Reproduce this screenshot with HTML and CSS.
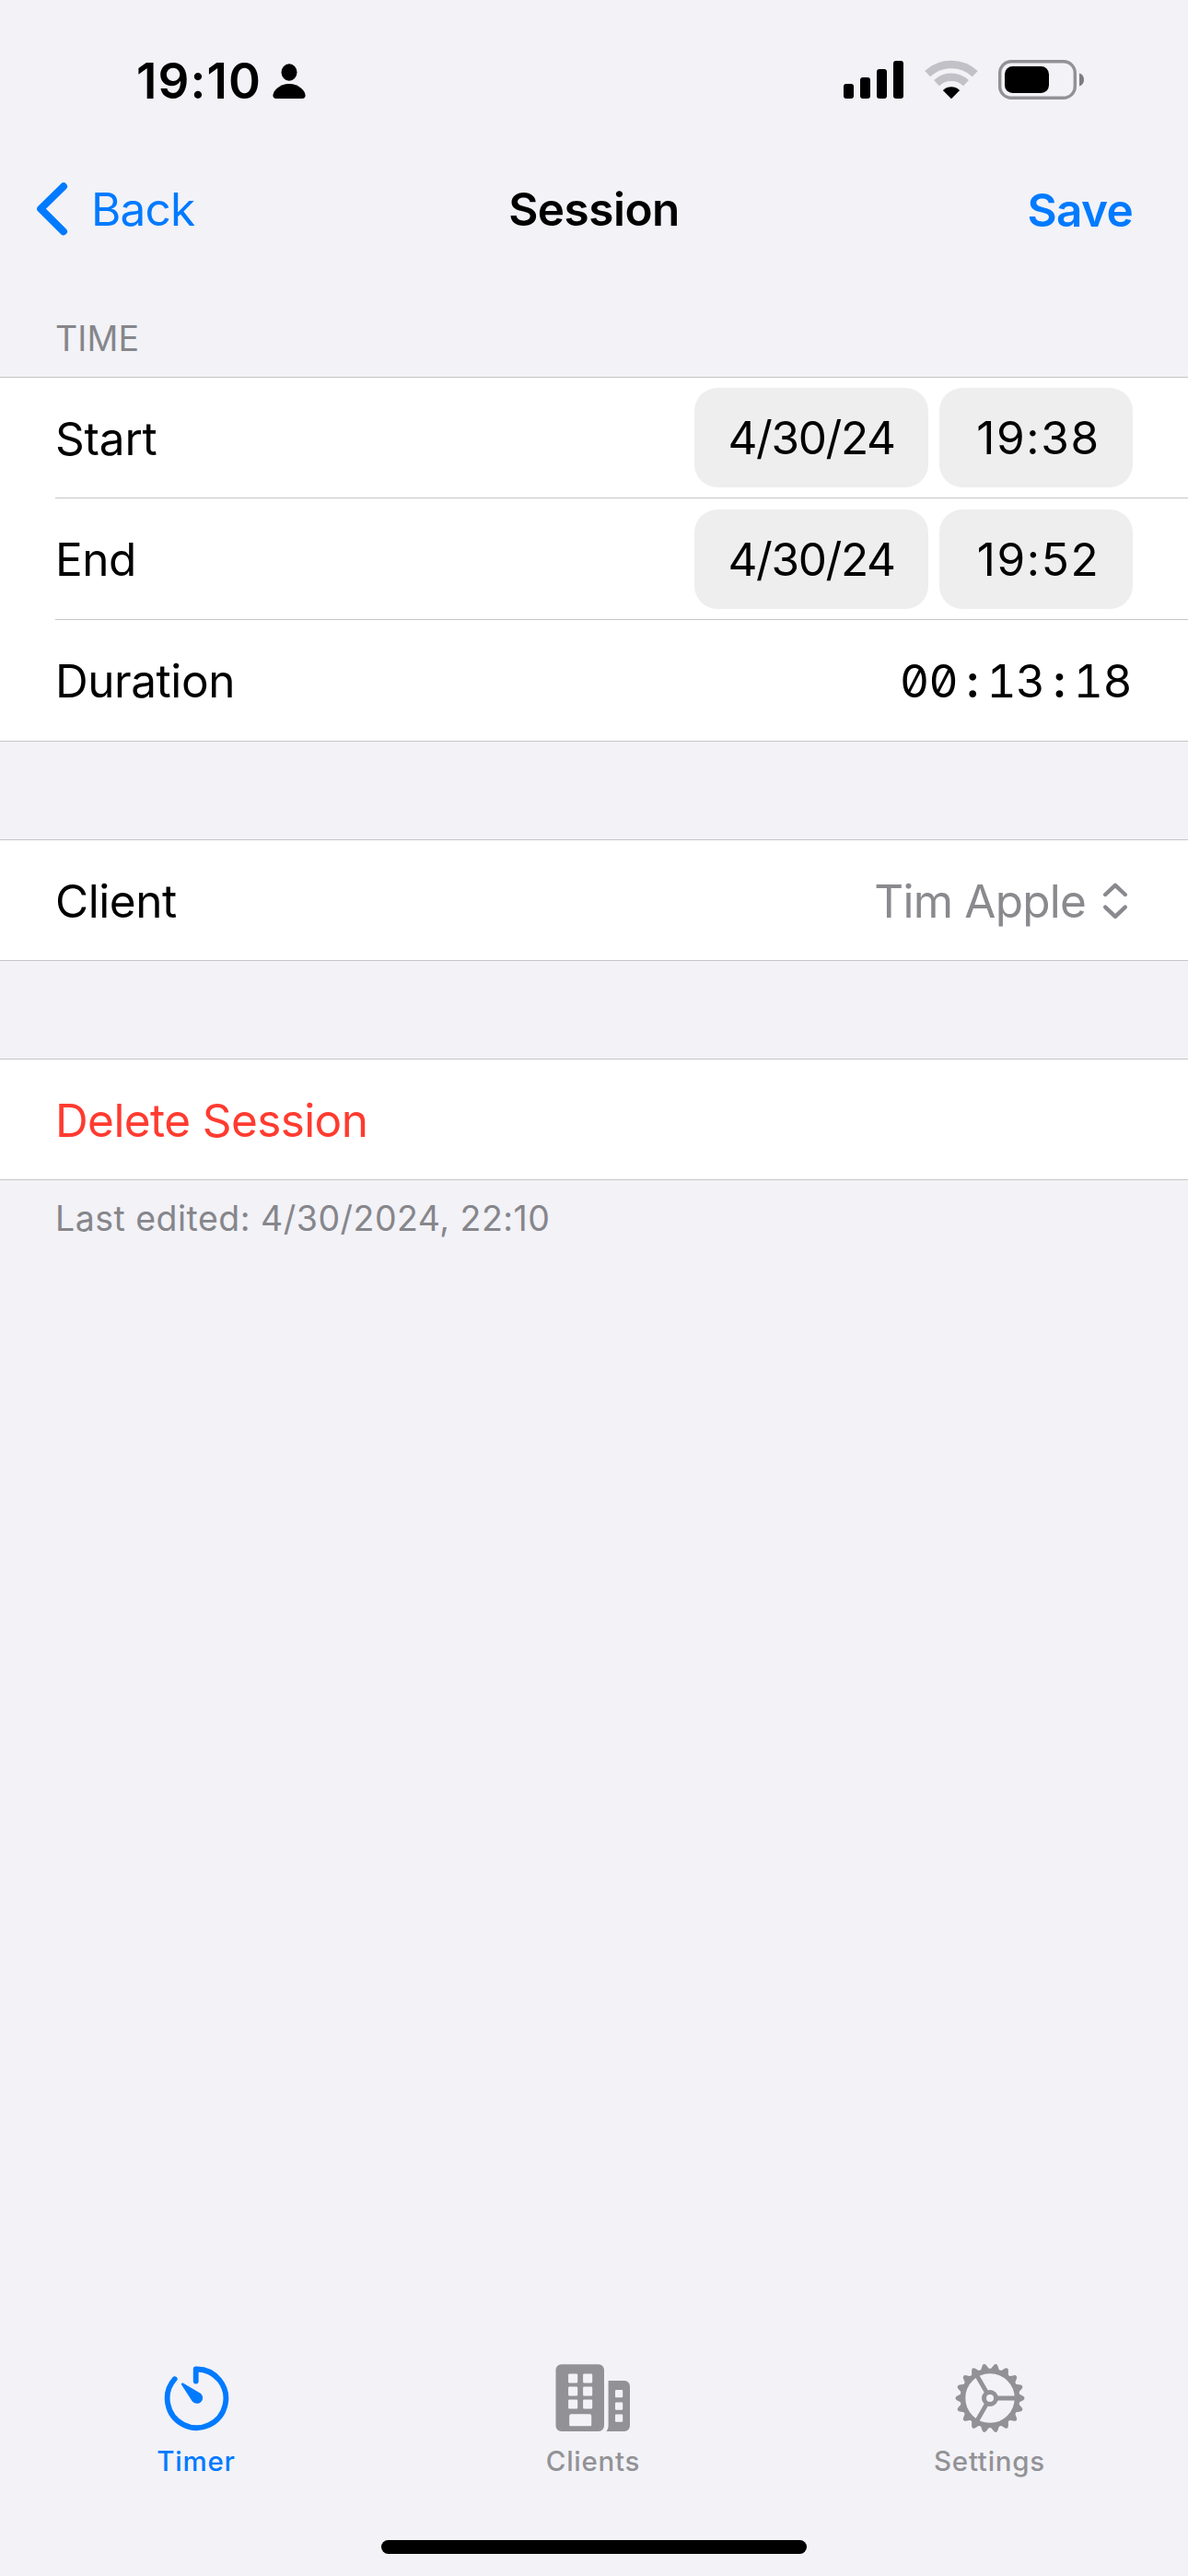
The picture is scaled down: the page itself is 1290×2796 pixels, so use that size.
FILE: index.html
```html
<!DOCTYPE html>
<html lang="en">
<head>
<meta charset="utf-8">
<title>Session</title>
<link rel="stylesheet" href="styles.css">
</head>
<body>
<div class="screen">
  <header class="status">
    <div class="status-left">
      <span class="clock">19:10</span>
      <svg class="person" width="36" height="38" viewBox="0 0 36 38"><ellipse cx="18" cy="9.500" rx="8.500" ry="9.300"/><path d="M4 38C1.500 38 .4 36.800.4 34.800.4 29.500 7.500 22 18 22s17.600 7.500 17.600 12.800c0 2-1.100 3.200-3.600 3.200z"/></svg>
    </div>
    <div class="status-right">
      <svg width="66" height="42" viewBox="0 0 66 42"><rect x="0" y="25" width="11" height="16" rx="3"/><rect x="18" y="18" width="11" height="23" rx="3"/><rect x="36" y="9" width="11" height="32" rx="3"/><rect x="54" y="0" width="11" height="41" rx="3"/></svg>
      <svg class="wifi" width="58" height="43" viewBox="0 0 58 43"><g fill="none" stroke="#c2c1c7" stroke-width="8.500"><path d="M3.200 15.200A37.500 37.500 0 0 1 54.800 15.200"/><path d="M13 25.200A23.200 23.200 0 0 1 45 25.200"/></g><path d="M29 42.300 20.300 33.600Q20 33 20.500 32.500A12.600 12.600 0 0 1 37.500 32.500Q38 33 37.700 33.600Z"/></svg>
      <svg width="94" height="43" viewBox="0 0 94 43"><rect x="1.700" y="1.700" width="81.600" height="39.600" rx="12.500" fill="none" stroke="#929195" stroke-width="3.400"/><rect x="7" y="7" width="48" height="29" rx="8.500"/><path d="M88 14.500c3.200.8 5 3.600 5 7s-1.800 6.200-5 7z" fill="#7d7c80"/></svg>
    </div>
  </header>

  <nav class="navbar">
    <a class="back"><svg width="34" height="58" viewBox="0 0 34 58"><path d="M29 4.300 4.200 28.700 29 53.300" fill="none" stroke="#007aff" stroke-width="8" stroke-linecap="round" stroke-linejoin="round"/></svg><span>Back</span></a>
    <h1>Session</h1>
    <a class="save">Save</a>
  </nav>

  <main>
    <h2 class="section-title">TIME</h2>
    <section class="group">
      <div class="row"><span class="start">Start</span><div class="pills"><span class="pill date">4/30/24</span><span class="pill time">19:38</span></div></div>
      <div class="row"><span>End</span><div class="pills"><span class="pill date">4/30/24</span><span class="pill time">19:52</span></div></div>
      <div class="row"><span>Duration</span><span class="duration">00<i>:</i>13<i>:</i>18</span></div>
    </section>
    <section class="group">
      <div class="row"><span>Client</span><span class="picker"><span>Tim Apple</span><svg width="28" height="40" viewBox="0 0 28 40"><g fill="none" stroke="#8a8a8e" stroke-width="4.400" stroke-linecap="round" stroke-linejoin="round"><path d="M3.200 13 14 2.800 24.800 13"/><path d="M3.200 26.600 14 36.800 24.800 26.600"/></g></svg></span></div>
    </section>
    <section class="group">
      <div class="row"><span class="delete">Delete Session</span></div>
    </section>
    <p class="footnote">Last edited: 4/30/2024, 22:10</p>
  </main>

  <footer class="tabs">
    <a class="tab timer">
      <svg width="76" height="76" viewBox="0 0 76 76"><path d="M14.700 17.200A31.800 31.800 0 1 0 37.700 6.500V19.500" fill="none" stroke="#007aff" stroke-width="5.800" stroke-linecap="round" stroke-linejoin="round"/><path d="M22.200 21.900C21.700 22.400 21.800 23 22.300 23.800L33.300 40.800C35.400 44 40 45 43 42.300 46 39.500 45.600 35 42.700 32.800L24.500 21.900C23.500 21.400 22.700 21.400 22.200 21.900Z" fill="#007aff"/></svg>
      <span>Timer</span>
    </a>
    <a class="tab clients">
      <svg width="82" height="76" viewBox="0 0 82 76"><path fill="#929296" fill-rule="evenodd" d="M6 1.200H47a6 6 0 0 1 6 6V68a6 6 0 0 1-6 6H6.500a6 6 0 0 1-6-6V7.200a6 6 0 0 1 6-6zM15.300 11.500h7.700a1.200 1.200 0 0 1 1.200 1.200v7.600a1.200 1.200 0 0 1-1.200 1.200h-7.700a1.200 1.200 0 0 1-1.200-1.200v-7.600a1.200 1.200 0 0 1 1.200-1.200zM31.300 11.500h7.700a1.200 1.200 0 0 1 1.200 1.200v7.600a1.200 1.200 0 0 1-1.200 1.200h-7.700a1.200 1.200 0 0 1-1.200-1.200v-7.600a1.200 1.200 0 0 1 1.200-1.200zM15.300 25.500h7.700a1.200 1.200 0 0 1 1.200 1.200v7.600a1.200 1.200 0 0 1-1.200 1.200h-7.700a1.200 1.200 0 0 1-1.200-1.200v-7.600a1.200 1.200 0 0 1 1.200-1.200zM31.300 25.500h7.700a1.200 1.200 0 0 1 1.200 1.200v7.600a1.200 1.200 0 0 1-1.200 1.200h-7.700a1.200 1.200 0 0 1-1.200-1.200v-7.600a1.200 1.200 0 0 1 1.200-1.200zM15.300 39.500h7.700a1.200 1.200 0 0 1 1.200 1.200v7.600a1.200 1.200 0 0 1-1.200 1.200h-7.700a1.200 1.200 0 0 1-1.200-1.200v-7.600a1.200 1.200 0 0 1 1.200-1.200zM31.300 39.500h7.700a1.200 1.200 0 0 1 1.200 1.200v7.600a1.200 1.200 0 0 1-1.200 1.200h-7.700a1.200 1.200 0 0 1-1.200-1.200v-7.600a1.200 1.200 0 0 1 1.200-1.200zM17.200 55.300h20a2 2 0 0 1 2 2V67.200a1 1 0 0 1-1 1h-22a1 1 0 0 1-1-1V57.300a2 2 0 0 1 2-2z"/><path fill="#929296" fill-rule="evenodd" d="M57.600 19H75a6 6 0 0 1 6 6V68a6 6 0 0 1-6 6H55.500Q57.600 71.500 57.600 68zM66 29h6.200a1 1 0 0 1 1 1v6.200a1 1 0 0 1-1 1h-6.200a1 1 0 0 1-1-1v-6.200a1 1 0 0 1 1-1zM66 42.500h6.200a1 1 0 0 1 1 1v6.200a1 1 0 0 1-1 1h-6.200a1 1 0 0 1-1-1v-6.200a1 1 0 0 1 1-1zM66 55.500h6.200a1 1 0 0 1 1 1v6.200a1 1 0 0 1-1 1h-6.200a1 1 0 0 1-1-1v-6.200a1 1 0 0 1 1-1z"/></svg>
      <span>Clients</span>
    </a>
    <a class="tab settings">
      <svg width="76" height="76" viewBox="-38 -38 76 76">
        <defs><path id="tooth" d="M30-5.500 36-2.200Q37.500-1.400 37.500 0T36 2.200L30 5.500Z"/></defs>
        <g fill="#929296"><use href="#tooth"/><use href="#tooth" transform="rotate(20)"/><use href="#tooth" transform="rotate(40)"/><use href="#tooth" transform="rotate(60)"/><use href="#tooth" transform="rotate(80)"/><use href="#tooth" transform="rotate(100)"/><use href="#tooth" transform="rotate(120)"/><use href="#tooth" transform="rotate(140)"/><use href="#tooth" transform="rotate(160)"/><use href="#tooth" transform="rotate(180)"/><use href="#tooth" transform="rotate(200)"/><use href="#tooth" transform="rotate(220)"/><use href="#tooth" transform="rotate(240)"/><use href="#tooth" transform="rotate(260)"/><use href="#tooth" transform="rotate(280)"/><use href="#tooth" transform="rotate(300)"/><use href="#tooth" transform="rotate(320)"/><use href="#tooth" transform="rotate(340)"/></g>
        <g fill="none" stroke="#929296"><circle r="29.500" stroke-width="5.600"/><circle r="6.500" stroke-width="5"/><path d="M8 0H28M-3.800-6.600-14-24.200M-3.800 6.600-14 24.200" stroke-width="4.800"/></g>
      </svg>
      <span>Settings</span>
    </a>
  </footer>
  <div class="home"></div>
</div>
</body>
</html>
```
FILE: styles.css
```css
* { box-sizing: border-box; }
body { margin: 0; background: #f2f2f7; color: #000; font-family: Inter, "Liberation Sans", sans-serif; }
svg { display: block; flex: none; }
.screen { width: 1290px; height: 2796px; display: flex; flex-direction: column; overflow: hidden; font-size: 49.5px; line-height: 60px; white-space: nowrap; }

.status { height: 168px; display: flex; justify-content: space-between; padding: 0 112px 0 148px; }
.status-left { display: flex; align-items: flex-start; gap: 12px; }
.clock { width: 136px; margin-top: 58px; font-size: 53px; font-weight: 600; letter-spacing: 1.1px; }
.person { margin-top: 69px; }
.status-right { display: flex; align-items: flex-start; padding-top: 65px; gap: 22px; }
.status-right svg:first-child { margin-top: 1px; }

.navbar { height: 120px; display: grid; grid-template-columns: 1fr auto 1fr; align-items: center; padding: 0 60px; }
.back { display: flex; align-items: center; gap: 25px; margin: -3px 0 0 -20px; color: #007aff; letter-spacing: -0.8px; }
.navbar h1 { margin: -2px 0 0; font-size: 49.5px; font-weight: 600; letter-spacing: -0.5px; }
.save { justify-self: end; color: #007aff; font-weight: 600; letter-spacing: -0.7px; }

.section-title { margin: 0; height: 121px; padding: 50px 0 0 60px; font-size: 37.5px; font-weight: 400; color: #86868b; letter-spacing: 0.1px; }
.group { background: #fff; border-top: 1px solid #c6c6c8; border-bottom: 1px solid #c6c6c8; padding-left: 60px; margin-bottom: 106px; }
.row { height: 130px; display: flex; justify-content: space-between; align-items: center; padding-right: 60px; letter-spacing: -0.45px; }
.row > span { padding-top: 1px; }
.row + .row { height: 132px; border-top: 1px solid #c6c6c8; }
.group:last-of-type { margin-bottom: 0; }
.row .start { letter-spacing: -0.2px; }
.pills { display: flex; gap: 12px; }
.pill { height: 108px; border-radius: 25px; background: #eee; line-height: 109px; text-align: center; }
.date { width: 254px; letter-spacing: -1.4px; }
.time { width: 210px; padding-left: 5px; letter-spacing: 1.6px; }
.duration { padding-right: 1px; letter-spacing: -0.5px; font-feature-settings: "tnum", "zero", "calt" 0; }
.duration i { display: inline-block; width: 31.2px; text-align: center; font-style: normal; font-weight: 600; }
.picker { display: flex; align-items: center; gap: 18px; color: #8a8a8e; padding-right: 5px; letter-spacing: -0.8px; }
.delete { color: #ff3b30; letter-spacing: -0.6px; }
.footnote { margin: 0; padding: 12px 0 0 60px; font-size: 37.5px; color: #86868b; letter-spacing: 0.48px; }

.tabs { margin-top: auto; height: 192px; display: grid; grid-template-columns: repeat(3, 1fr); color: #929296; }
.tab { display: flex; flex-direction: column; align-items: center; font-size: 29.5px; font-weight: 500; line-height: 36px; letter-spacing: 0.75px; gap: 12px; }
.timer { color: #007aff; padding-right: 4px; }
.clients { padding-right: 2px; }
.settings { padding-right: 1px; }
.home { flex: none; width: 462px; height: 15px; border-radius: 8px; background: #000; margin: 0 auto 24px; }
```
